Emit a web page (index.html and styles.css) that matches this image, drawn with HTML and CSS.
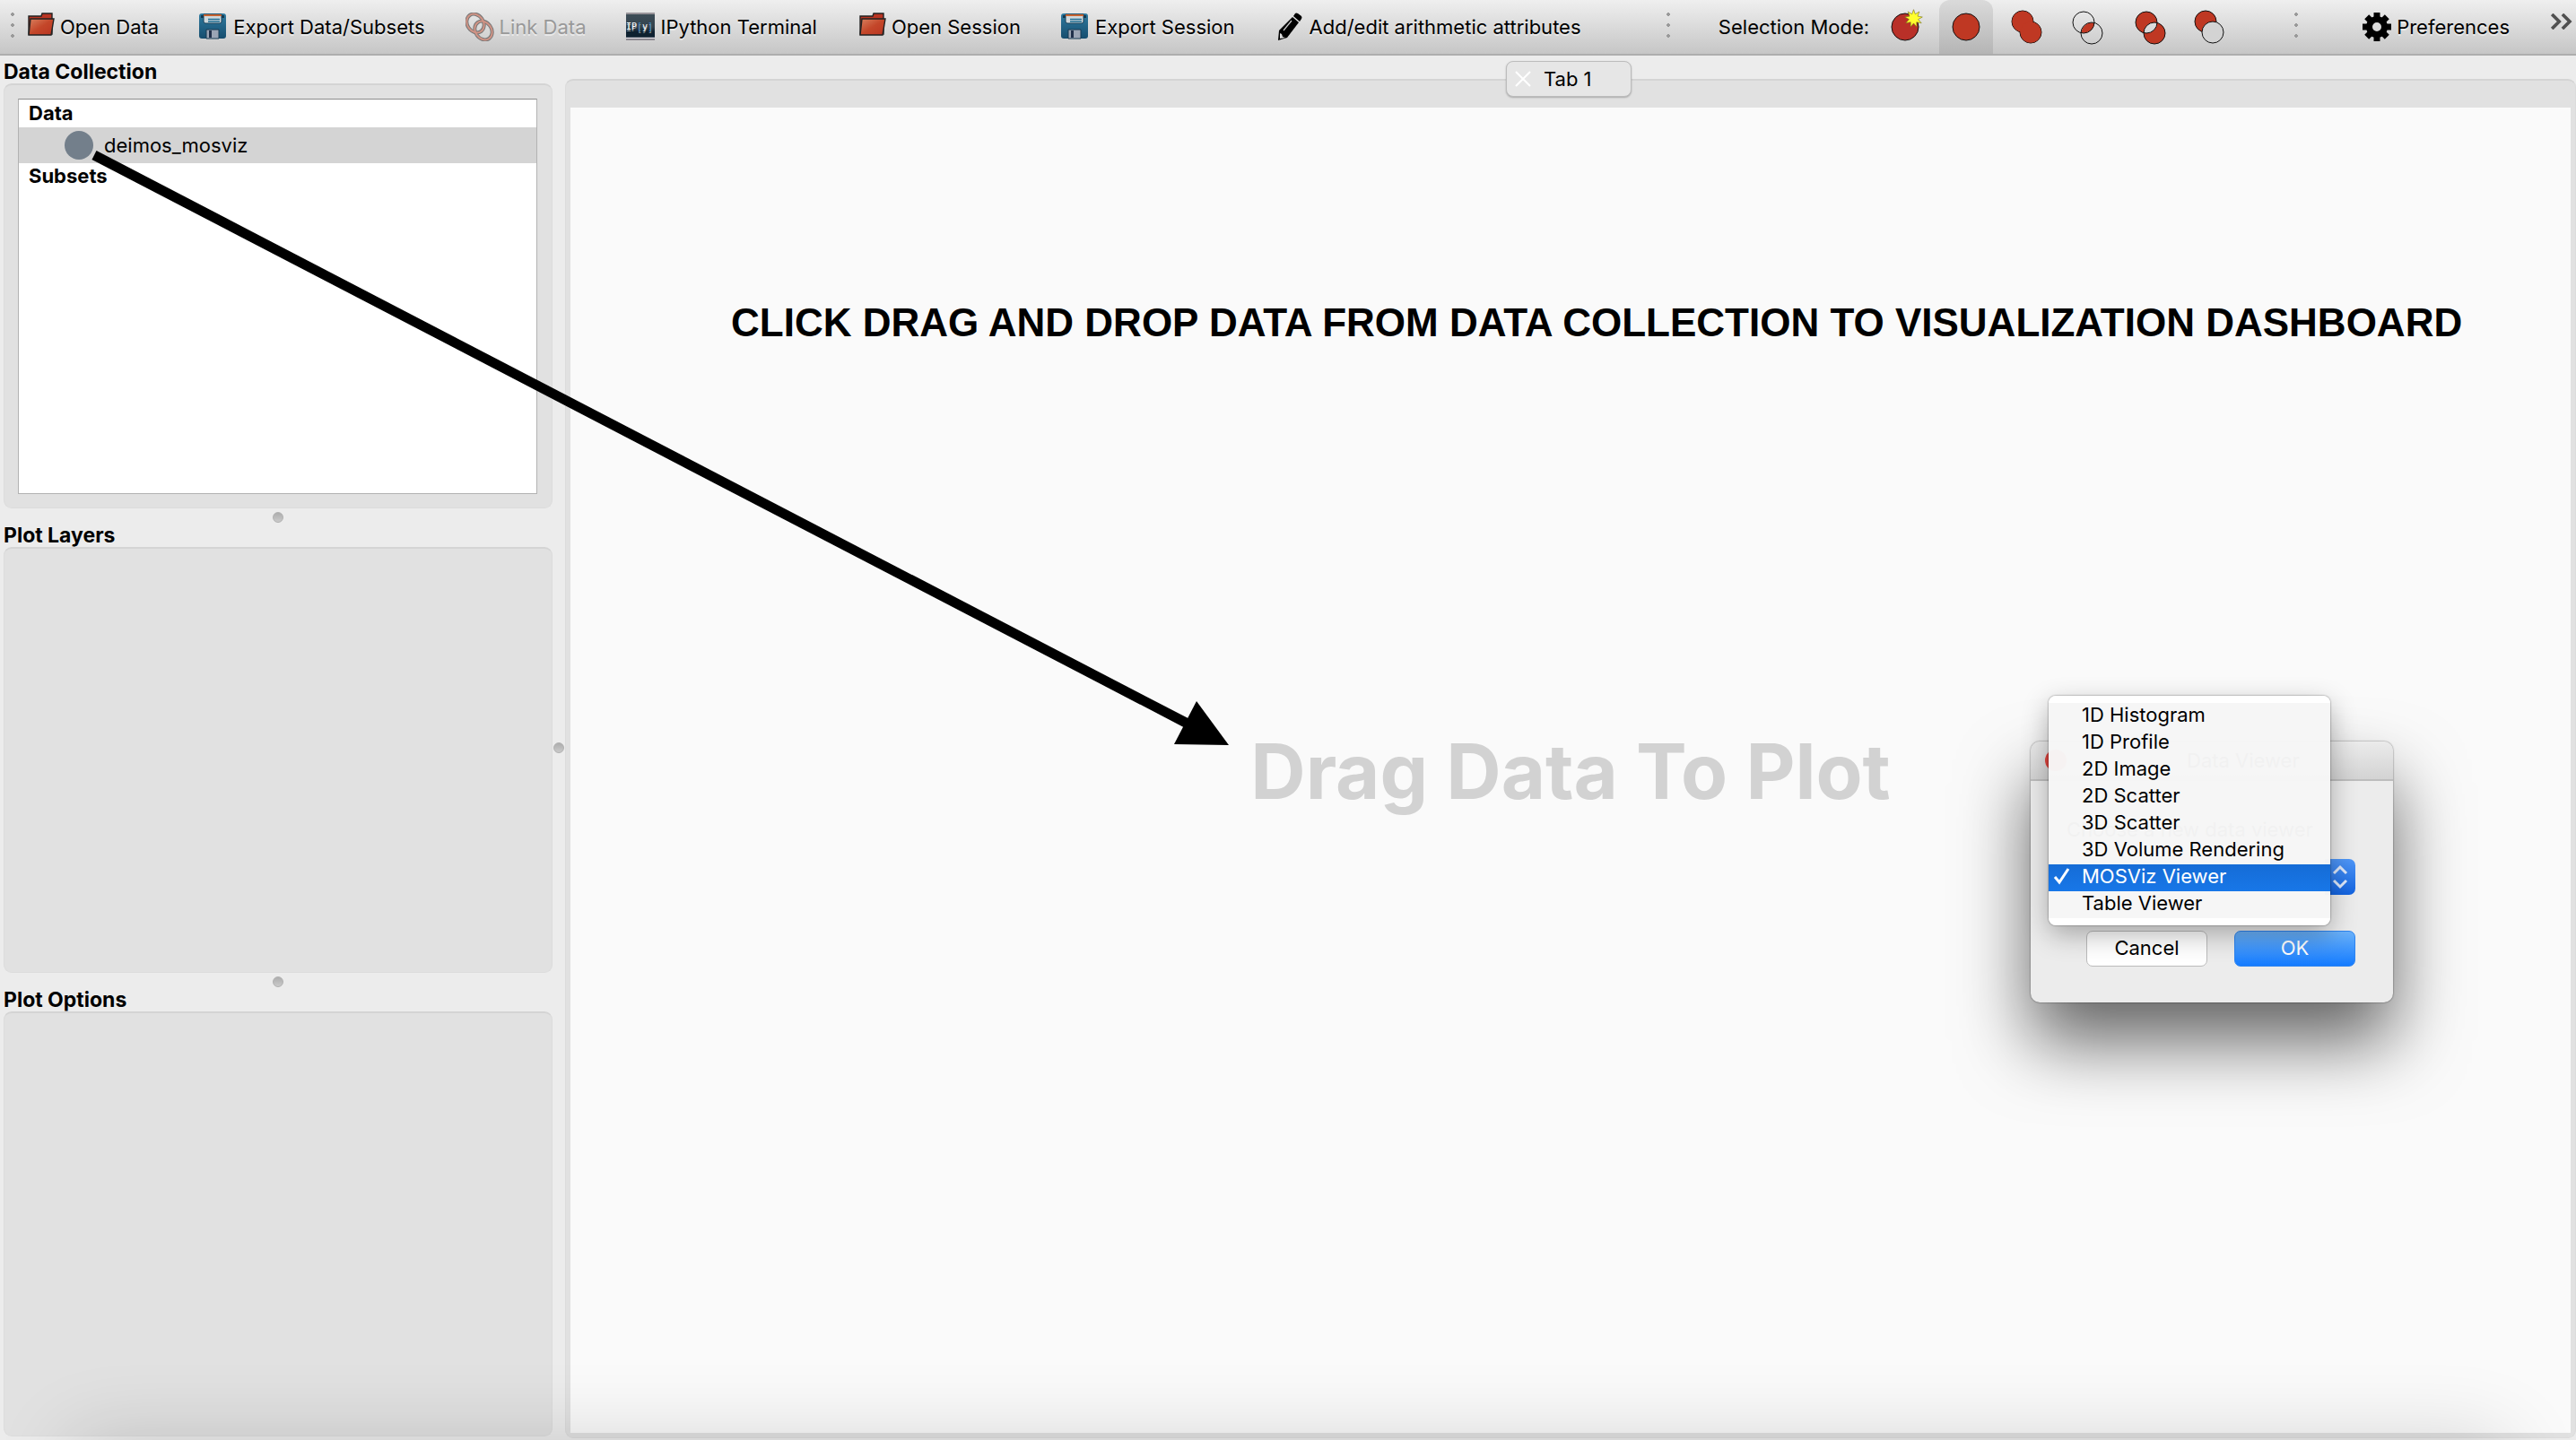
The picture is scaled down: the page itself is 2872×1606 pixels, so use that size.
FILE: index.html
```html
<!DOCTYPE html>
<html lang="en">
<head>
<meta charset="utf-8">
<title>Glue</title>
<link rel="stylesheet" href="styles.css">
</head>
<body>
<svg class="defs" aria-hidden="true">
  <defs>
    <linearGradient id="g-folder" x1="0" y1="0" x2="1" y2="1">
      <stop offset="0" stop-color="#d9815f"/><stop offset=".5" stop-color="#c4472a"/><stop offset="1" stop-color="#b93421"/>
    </linearGradient>
    <linearGradient id="g-disk" x1="0" y1="0" x2="0" y2="1">
      <stop offset="0" stop-color="#2f7ba0"/><stop offset="1" stop-color="#164d6e"/>
    </linearGradient>
    <linearGradient id="g-term" x1="0" y1="0" x2="0" y2="1">
      <stop offset="0" stop-color="#3d4d57"/><stop offset=".5" stop-color="#33434e"/><stop offset=".7" stop-color="#0e2130"/><stop offset="1" stop-color="#0e2130"/>
    </linearGradient>
    <symbol id="folder" viewBox="0 0 32 32">
      <path d="M3 24V4H17L18 1H29V24Z" fill="#b93422" stroke="#222" stroke-width="1.4"/>
      <path d="M5 7H31L28 25H3Z" fill="url(#g-folder)" stroke="#222" stroke-width="1.4"/>
    </symbol>
    <symbol id="disk" viewBox="0 0 32 32">
      <rect x="0" y="1" width="30" height="28" rx="3" fill="url(#g-disk)"/>
      <rect x="2" y="3" width="3" height="3" fill="#173a50"/><rect x="25" y="3" width="3" height="3" fill="#173a50"/>
      <path d="M5 2H25V10Q25 12 23 12H7Q5 12 5 10Z" fill="#cfd8dc" stroke="#174059"/>
      <path d="M5 2H25V4H5Z" fill="#c8622f"/>
      <path d="M10 7.500H23M10 10H23" stroke="#1f6d93" stroke-width="1.500"/>
      <path d="M8 19H22V29H8Z" fill="#9ba5b5" stroke="#163a52"/>
      <path d="M11 20H14V28H11Z" fill="#20304a"/>
    </symbol>
  </defs>
</svg>

<div class="window">
  <header class="toolbar">
    <div class="group">
      <span class="grip"></span>
      <div class="tools">
        <button class="tool"><svg class="icon"><use href="#folder"/></svg>Open Data</button>
        <button class="tool"><svg class="icon"><use href="#disk"/></svg>Export Data/Subsets</button>
        <button class="tool" disabled>
          <svg class="icon" viewBox="0 0 32 32" fill="none"><g stroke="#777" stroke-width="4"><ellipse cx="11" cy="12" rx="9" ry="11" transform="rotate(-35 11 12)"/><ellipse cx="20" cy="20" rx="9" ry="11" transform="rotate(-35 20 20)"/></g><g stroke="#d09385" stroke-width="2"><ellipse cx="11" cy="12" rx="9" ry="11" transform="rotate(-35 11 12)"/><ellipse cx="20" cy="20" rx="9" ry="11" transform="rotate(-35 20 20)"/></g></svg>Link Data</button>
        <button class="tool">
          <svg class="icon" viewBox="0 0 32 32"><rect y="2" width="32" height="28" fill="url(#g-term)"/><path d="M0 1H32M0 30H32" stroke="#7d7880" stroke-width="1.400"/><path d="M0 28.500H32" stroke="#e8e4ea" stroke-width="1.500"/><text x="0" y="19" class="term-text">IP<tspan fill="#3f86c0">[</tspan>y<tspan fill="#3f86c0">]</tspan></text></svg>IPython Terminal</button>
        <button class="tool"><svg class="icon"><use href="#folder"/></svg>Open Session</button>
        <button class="tool"><svg class="icon"><use href="#disk"/></svg>Export Session</button>
        <button class="tool">
          <svg class="icon" viewBox="0 0 32 32"><path d="M19 5L26 11L13 28L3 31L4 20Z"/><path d="M20 4L22 1Q23 0 25 1L29 4Q30 6 29 7L27 10Z"/><path d="M5 23L7 24L8 27L11 28L5 29Z" fill="#ddd"/><path d="M18 9L9 20" stroke="#ccc" stroke-width="1.200"/></svg>Add/edit arithmetic attributes</button>
      </div>
    </div>
    <div class="group modes-group">
      <span class="grip"></span>
      <span class="mode-label">Selection Mode:</span>
      <div class="modes">
        <button class="mode" aria-label="New subset"><svg viewBox="0 0 60 60"><circle cx="30" cy="30" r="15" fill="#b93028"/><path d="M39.500 10.700L41.300 15.800L45.900 13L44 18.100L49.300 19L44.600 21.600L48.200 25.700L42.800 24.700L42.900 30.100L39.500 25.900L36.100 30.100L36.200 24.700L30.800 25.700L34.400 21.600L29.700 19L35 18.100L33.100 13L37.700 15.800Z" fill="#ffff2e" stroke="#77701a" stroke-width=".6"/></svg></button>
        <button class="mode active" aria-label="Replace"><svg viewBox="0 0 60 60"><circle cx="30" cy="30" r="15" fill="#bf3823"/></svg></button>
        <button class="mode" aria-label="Or"><svg viewBox="0 0 60 60"><g fill="#bf3823"><circle cx="25" cy="24" r="12"/><circle cx="34" cy="36" r="12"/></g><g fill="#bf3823" stroke="none"><circle cx="25" cy="24" r="11.500"/><circle cx="34" cy="36" r="11.500"/></g></svg></button>
        <button class="mode" aria-label="And"><svg viewBox="0 0 60 60"><path d="M37 25.500A12 12 0 0 1 22.500 36.500A12 12 0 0 1 37 25.500Z" fill="#bf3823" stroke="none"/><g fill="none"><circle cx="25" cy="25" r="12"/><circle cx="34" cy="37" r="12"/></g></svg></button>
        <button class="mode" aria-label="Xor"><svg viewBox="0 0 60 60"><path fill-rule="evenodd" fill="#bf3823" d="M15 25a12 12 0 1 0 24 0a12 12 0 1 0 -24 0ZM24 37a12 12 0 1 0 24 0a12 12 0 1 0 -24 0Z"/></svg></button>
        <button class="mode" aria-label="And not"><svg viewBox="0 0 60 60"><circle cx="25" cy="24" r="12" fill="#bf3823"/><circle cx="33" cy="36" r="12" fill="#d3d3d3"/></svg></button>
      </div>
    </div>
    <div class="group prefs-group">
      <span class="grip"></span>
      <button class="tool">
        <svg class="icon" viewBox="-16 -16 32 32" fill="none" stroke="#000" stroke-width="7"><circle r="8.500"/><path d="M0 -9V-16M0 9V16M-9 0H-16M9 0H16M-6.500 -6.500L-11.300 -11.300M6.500 6.500L11.300 11.300M-6.500 6.500L-11.300 11.300M6.500 -6.500L11.300 -11.300"/></svg>Preferences</button>
      <button class="more" aria-label="More tools"><svg viewBox="0 0 28 20" fill="none" stroke="#505050" stroke-width="4"><path d="M2 1L11 10L2 19M15 1L24 10L15 19"/></svg></button>
    </div>
  </header>

  <main class="workspace">
    <aside class="sidebar">
      <section class="panel">
        <h2>Data Collection</h2>
        <div class="frame padded">
          <ul class="tree">
            <li class="tree-head">Data</li>
            <li class="tree-item"><span class="marker"></span>deimos_mosviz</li>
            <li class="tree-head">Subsets</li>
          </ul>
        </div>
      </section>
      <div class="handle"><span class="knob"></span></div>
      <section class="panel"><h2>Plot Layers</h2><div class="frame"></div></section>
      <div class="handle"><span class="knob"></span></div>
      <section class="panel"><h2>Plot Options</h2><div class="frame"></div></section>
    </aside>
    <div class="handle vertical"><span class="knob"></span></div>
    <section class="dashboard">
      <div class="tab">
        <button class="tab-close" aria-label="Close tab"><svg viewBox="0 0 18 18" stroke="#fff" stroke-width="2"><path d="M1 1L17 17M17 1L1 17"/></svg></button>
        <span>Tab 1</span>
      </div>
      <div class="canvas">
        <p class="hint">Drag Data To Plot</p>
      </div>
    </section>
  </main>
  <div class="edge-shade"></div>

  <p class="note">CLICK DRAG AND DROP DATA FROM DATA COLLECTION TO VISUALIZATION DASHBOARD</p>
  <svg class="arrow" viewBox="0 0 1280 680" aria-hidden="true"><path d="M5 13L1224 647" stroke="#000" stroke-width="11"/><path d="M1270 671L1234 622L1209 670Z"/></svg>

  <div class="dialog" role="dialog" aria-labelledby="dialog-title">
    <div class="titlebar"><span class="close"></span><span id="dialog-title">Data Viewer</span></div>
    <div class="dialog-body">
      <label for="viewer">Choose a new data viewer</label>
      <div class="select-wrap">
        <select id="viewer"><option>MOSViz Viewer</option></select>
        <svg viewBox="0 0 34 40" fill="none" stroke="#dfe9fb" stroke-width="3"><path d="M10 16L17 9L24 16M10 24L17 31L24 24"/></svg>
      </div>
      <div class="actions"><button class="btn">Cancel</button><button class="btn primary">OK</button></div>
    </div>
    <ul class="menu" role="listbox" aria-label="Data viewer">
      <li role="option">1D Histogram</li>
      <li role="option">1D Profile</li>
      <li role="option">2D Image</li>
      <li role="option">2D Scatter</li>
      <li role="option">3D Scatter</li>
      <li role="option">3D Volume Rendering</li>
      <li role="option" aria-selected="true"><svg class="check" viewBox="0 0 20 20" fill="none" stroke="#fff" stroke-width="3"><path d="M2 11L7 17L17 2"/></svg>MOSViz Viewer</li>
      <li role="option">Table Viewer</li>
    </ul>
  </div>
</div>
</body>
</html>
```

FILE: styles.css
```css
* { box-sizing: border-box; }

body {
  margin: 0;
  background: #ececec;
  color: #000;
  font: 22px/24px Inter, "Noto Sans", sans-serif;
}

h2, p, ul { margin: 0; padding: 0; }
ul { list-style: none; }

button {
  border: 0;
  padding: 0;
  background: none;
  color: inherit;
  font: inherit;
}

.defs { position: absolute; width: 0; height: 0; }

.window {
  position: relative;
  display: flex;
  flex-direction: column;
  height: 100vh;
  overflow: hidden;
}

/* Toolbar */
.toolbar {
  display: flex;
  height: 62px;
  flex: none;
  background: linear-gradient(#efefef, #c6c6c6);
  border-bottom: 2px solid #adadad;
  white-space: nowrap;
}

.group { display: flex; align-items: center; }

.grip {
  width: 4px;
  height: 28px;
  margin-left: 12px;
  margin-bottom: 4px;
  background: radial-gradient(circle at 2px 2px, #999 2px, transparent 2px) 0 0 / 4px 12px;
}

.tools { display: flex; gap: 45px; margin-left: 13px; }

.tool {
  display: flex;
  align-items: center;
  gap: 6px;
  text-shadow: 0 2px 0 rgba(255, 255, 255, .5);
}
.tool:disabled { color: #999; }

.icon { width: 32px; height: 32px; flex: none; }
.term-text { font: 10px "DejaVu Sans Mono", monospace; fill: #fff; }

.modes-group { margin-left: auto; }
.mode-label { margin-left: 54px; }
.modes { display: flex; gap: 8px; margin-left: 10px; }
.mode { width: 60px; height: 60px; border-radius: 12px 12px 0 0; }
.mode.active { background: linear-gradient(#dadada, #b5b5b5); }
.mode svg { display: block; width: 60px; height: 60px; stroke: #111; stroke-width: 1; }

.prefs-group { margin-left: 52px; }
.prefs-group .tool { margin-left: 72px; }
.more { margin: 0 2px 12px 44px; }
.more svg { display: block; width: 28px; height: 18px; }

/* Workspace */
.workspace { display: flex; flex: 1; min-height: 0; }

.sidebar {
  display: flex;
  flex-direction: column;
  width: 616px;
  padding: 8px 0 4px 4px;
}

.panel { display: flex; flex-direction: column; flex: 1; }
.panel h2 { padding-bottom: 2px; font-size: 23px; line-height: 21px; font-weight: 700; }

.frame {
  flex: 1;
  display: flex;
  background: #e1e1e1;
  border: 1px solid #dcdcdc;
  border-top: 2px solid #d4d4d4;
  border-radius: 9px;
}
.frame.padded { padding: 15px 16px 15px 15px; }

.tree {
  flex: 1;
  background: #fff;
  border: 1px solid #b2b2b2;
  border-top-color: #8c8c8c;
  padding-top: 1px;
}
.tree-head { height: 30px; padding: 2px 11px 0; font-weight: 700; line-height: 24px; }
.tree-item {
  display: flex;
  align-items: center;
  gap: 12px;
  height: 40px;
  padding-left: 51px;
  background: #d4d4d4;
}
.marker { width: 32px; height: 32px; border-radius: 50%; background: #737f8b; }

.handle { display: flex; align-items: center; justify-content: center; height: 20px; flex: none; }
.handle.vertical { width: 14px; height: auto; }
.knob {
  width: 12px;
  height: 12px;
  border-radius: 50%;
  flex: none;
  background: linear-gradient(#adadad, #cacaca);
  border: 1px solid #b0b0b0;
}

.dashboard {
  position: relative;
  display: flex;
  flex: 1;
  margin: 26px 0 2px;
  padding: 30px 5px 5px;
  background: #e1e1e1;
  border: 1px solid #dcdcdc;
  border-top: 2px solid #d4d4d4;
  border-radius: 9px;
}

.tab {
  position: absolute;
  top: -22px;
  left: calc(50% - 72px);
  display: flex;
  align-items: center;
  gap: 14px;
  width: 140px;
  height: 40px;
  padding-left: 9px;
  border: 1px solid #bcbcbc;
  border-radius: 8px;
  background: #e6e6e6;
  box-shadow: 0 1px 2px rgba(0, 0, 0, .25);
}
.tab-close svg { display: block; width: 18px; height: 18px; }

.canvas {
  display: flex;
  flex: 1;
  align-items: center;
  justify-content: center;
  padding-top: 4px;
  background: #fafafa;
}
.hint { color: #d2d2d2; font-size: 85px; line-height: 100px; font-weight: 700; }

.edge-shade {
  position: absolute;
  top: 100%;
  left: 80px;
  right: 80px;
  height: 100px;
  box-shadow: 0 0 90px rgba(0, 0, 0, .16);
}

/* Annotation over the window */
.note {
  position: absolute;
  top: 334px;
  left: 815px;
  font: 700 44px/52px "Liberation Sans", Arial, sans-serif;
  white-space: nowrap;
}
.arrow { position: absolute; top: 160px; left: 100px; width: 1280px; height: 680px; }

/* Viewer dialog */
.dialog {
  position: absolute;
  top: 827px;
  right: 204px;
  width: 404px;
  border-radius: 10px;
  background: #ececec;
  box-shadow: 0 0 2px rgba(0, 0, 0, .6), 0 44px 80px rgba(0, 0, 0, .6);
}
.titlebar {
  display: flex;
  align-items: center;
  height: 44px;
  padding-left: 16px;
  gap: 134px;
  border-bottom: 2px solid #bdbdbd;
  border-radius: 10px 10px 0 0;
  background: linear-gradient(#ebebeb, #d3d3d3);
}
.titlebar .close { width: 24px; height: 24px; border-radius: 50%; background: #e0443e; }

.dialog-body {
  display: flex;
  flex-direction: column;
  padding: 42px 42px 40px 40px;
}
.select-wrap { display: grid; height: 40px; margin: 21px 0 40px; }
.select-wrap > * { grid-area: 1 / 1; }
.select-wrap select {
  appearance: none;
  border: 0;
  border-radius: 7px;
  padding: 0 12px;
  background: linear-gradient(#4f97f8, #1263e0) right / 34px 100% no-repeat #fff;
  font: inherit;
}
.select-wrap svg { justify-self: end; width: 34px; height: 40px; pointer-events: none; }

.actions { display: flex; justify-content: flex-end; gap: 30px; }
.btn {
  width: 135px;
  height: 40px;
  padding-bottom: 2px;
  border: 1px solid #bbb;
  border-radius: 7px;
  background: #fff;
}
.btn.primary { border-color: #2d84f0; background: linear-gradient(#6bb2fa, #147bff); color: #fff; }

.menu {
  position: absolute;
  top: -51px;
  left: 20px;
  width: 314px;
  border-top: 8px solid #fff;
  border-bottom: 8px solid #fff;
  border-radius: 8px;
  background: rgba(246, 246, 246, .98);
  box-shadow: 0 0 2px rgba(0, 0, 0, .6), 0 10px 30px rgba(0, 0, 0, .3);
}
.menu li {
  display: flex;
  align-items: center;
  height: 30px;
  padding-left: 37px;
  padding-bottom: 4px;
}
.menu li[aria-selected] {
  padding-left: 5px;
  gap: 12px;
  background: linear-gradient(#156cd6, #1877e8);
  color: #fff;
}
.check { width: 20px; height: 20px; }
```
